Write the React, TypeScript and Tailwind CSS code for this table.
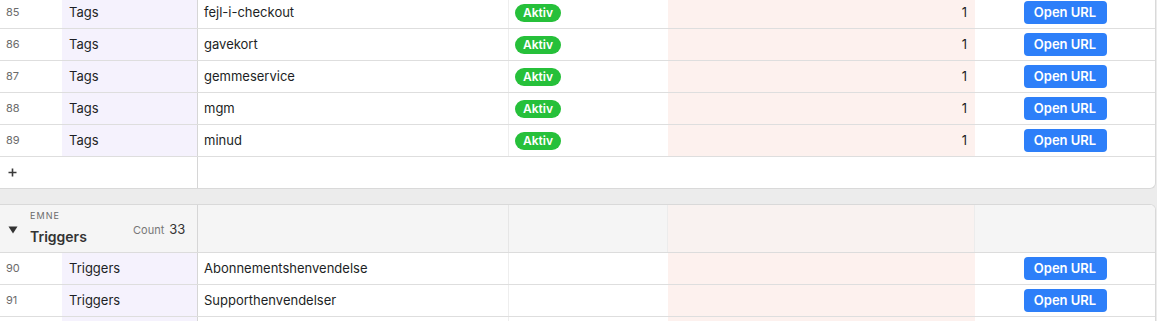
import React from "react";

const FONT = { fontFamily: "Inter, 'Noto Sans', 'Liberation Sans', sans-serif" };

type Row = { n?: number; emne: string; name: string; aktiv: boolean; count?: number; button?: boolean };

const top: Row[] = [
  { n: 85, emne: "Tags", name: "fejl-i-checkout", aktiv: true, count: 1, button: true },
  { n: 86, emne: "Tags", name: "gavekort", aktiv: true, count: 1, button: true },
  { n: 87, emne: "Tags", name: "gemmeservice", aktiv: true, count: 1, button: true },
  { n: 88, emne: "Tags", name: "mgm", aktiv: true, count: 1, button: true },
  { n: 89, emne: "Tags", name: "minud", aktiv: true, count: 1, button: true },
];

const bottom: Row[] = [
  { n: 90, emne: "Triggers", name: "Abonnementshenvendelse", aktiv: false, button: true },
  { n: 91, emne: "Triggers", name: "Supporthenvendelser", aktiv: false, button: true },
  { emne: "", name: "", aktiv: false },
];

function DataRow({ r }: { r: Row }) {
  return (
    <div className="flex h-[32px] border-b border-[#dedede] text-[13px] text-[#1d1f25]">
      <div className="w-[62px] shrink-0 flex items-center pl-[6px] text-[11px] text-[#6b6b6b] bg-white">
        {r.n}
      </div>
      <div className="w-[136px] shrink-0 flex items-center pl-[7px] bg-[#f5f2fd] border-r border-[#d6d6d6]">
        {r.emne}
      </div>
      <div className="w-[311px] shrink-0 flex items-center pl-[6px] border-r border-[#eeeeee]">
        {r.name}
      </div>
      <div className="w-[159px] shrink-0 flex items-center pl-[6px]">
        {r.aktiv && (
          <span className="h-[18px] px-[8px] rounded-full bg-[#26c03a] text-white text-[12px] font-semibold flex items-center leading-none">
            Aktiv
          </span>
        )}
      </div>
      <div className="w-[307px] shrink-0 flex items-center justify-end pr-[8px] bg-[#fdf1ee]">
        {r.count}
      </div>
      <div className="flex-1 flex items-center justify-center">
        {r.button && (
          <button className="w-[83px] h-[23px] rounded-[4px] bg-[#2d7ff9] text-white text-[13px] font-semibold leading-none">
            Open URL
          </button>
        )}
      </div>
    </div>
  );
}

export default function App() {
  return (
    <div style={FONT} className="w-[1157px] h-[321px] overflow-hidden bg-[#ececec]">
      <div className="-mt-[3px] w-[1156px] bg-white border-r border-b border-[#d9d9d9] rounded-br-[6px] overflow-hidden">
        {top.map((r) => (
          <DataRow key={r.n} r={r} />
        ))}
        <div className="flex h-[31px]">
          <div className="w-[198px] shrink-0 flex items-center pl-[8px] border-r border-[#d6d6d6] text-[#333]">
            <svg width="9" height="9" viewBox="0 0 9 9">
              <path d="M4.5 0.5v8M0.5 4.5h8" stroke="#3a3a3a" strokeWidth="1.6" />
            </svg>
          </div>
          <div className="flex-1" />
        </div>
      </div>
      <div className="mt-[15px] w-[1156px] bg-white border-t border-r border-[#d9d9d9] rounded-tr-[6px] overflow-hidden">
        <div className="flex h-[48px] border-b border-[#dcdcdc] bg-[#f5f5f5]">
          <div className="w-[198px] shrink-0 relative border-r border-[#d6d6d6]">
            <svg className="absolute left-[8px] top-[21px]" width="10" height="8" viewBox="0 0 10 8">
              <path d="M0.5 0.5h9L5 7.5z" fill="#333" />
            </svg>
            <div className="absolute left-[30px] top-[4px] text-[9px] tracking-[0.12em] text-[#6b6b6b]">EMNE</div>
            <div className="absolute left-[30px] top-[21px] text-[14px] font-semibold text-[#333]">Triggers</div>
            <div className="absolute left-[133px] top-[15px] flex items-baseline gap-[5px]">
              <span className="text-[11px] text-[#777]">Count</span>
              <span className="text-[13px] text-[#333]">33</span>
            </div>
          </div>
          <div className="w-[311px] shrink-0 border-r border-[#e6e6e6]" />
          <div className="w-[159px] shrink-0 border-r border-[#ececec]" />
          <div className="w-[307px] shrink-0 bg-[#f9f2f0] border-r border-[#ececec]" />
          <div className="flex-1" />
        </div>
        {bottom.map((r, i) => (
          <DataRow key={i} r={r} />
        ))}
      </div>
    </div>
  );
}
